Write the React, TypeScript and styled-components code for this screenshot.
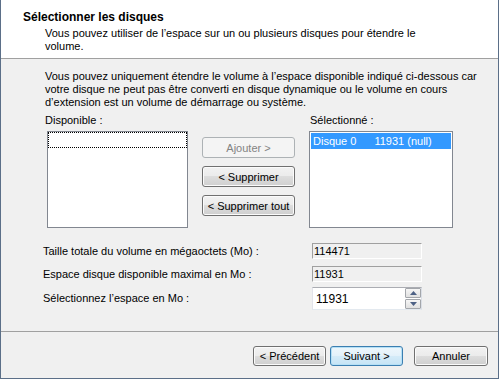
import styled, { createGlobalStyle } from "styled-components";

const GlobalStyle = createGlobalStyle`
  html, body {
    margin: 0;
    padding: 0;
    background: #ffffff;
  }
  * {
    box-sizing: border-box;
  }
`;

const Window = styled.div`
  width: 499px;
  height: 379px;
  display: flex;
  flex-direction: column;
  background: #f0f0f0;
  border: 1px solid #5b6f88;
  border-top: none;
  font-family: "Liberation Sans", Arial, sans-serif;
  font-size: 11px;
  color: #000;
`;

const Header = styled.header`
  height: 59px;
  background: #ffffff;
  padding: 10px 0 0 22px;
  border-bottom: 1px solid #a0a0a0;
`;

const Title = styled.h1`
  margin: 0;
  font-size: 12px;
  font-weight: bold;
  line-height: 14px;
`;

const Subtitle = styled.p`
  margin: 3px 0 0 22px;
  line-height: 13px;
`;

const Body = styled.main`
  flex: 1;
  padding: 11px 0 0 43px;
  display: flex;
  flex-direction: column;
`;

const Intro = styled.p`
  margin: 0 0 0 1px;
  line-height: 13px;
`;

const Picker = styled.div`
  margin-top: 5px;
  display: grid;
  grid-template-columns: 144px 93px 144px;
  grid-template-rows: 13px 97px;
  column-gap: 14px;
  row-gap: 4px;
  & > :nth-child(3) {
    margin-left: 3px;
  }
`;

const Caption = styled.span<{ $col: number }>`
  grid-column: ${(p) => p.$col};
  line-height: 13px;
  padding-left: 1px;
`;

const ListBox = styled.div`
  background: #ffffff;
  border: 1px solid #828790;
`;

const FocusRow = styled.div`
  height: 16px;
  border: 1px dotted #000;
`;

const SelectedRow = styled.div`
  margin: 1px;
  height: 16px;
  background: #3399ff;
  color: #ffffff;
  display: flex;
  align-items: center;
  padding-left: 2px;
  gap: 18px;
`;

const ButtonStack = styled.div`
  padding-top: 6px;
  display: flex;
  flex-direction: column;
  gap: 8px;
`;

const Button = styled.button<{ $default?: boolean; $w?: number; $h?: number }>`
  width: ${(p) => p.$w ?? 93}px;
  height: ${(p) => p.$h ?? 21}px;
  padding: 0;
  font-family: inherit;
  font-size: 11px;
  color: #000;
  border-radius: 3px;
  border: 1px solid ${(p) => (p.$default ? "#3c7fb1" : "#707070")};
  box-shadow: inset 0 0 0 1px ${(p) => (p.$default ? "#b5e0f6" : "#fbfbfb")};
  background: ${(p) =>
    p.$default
      ? "linear-gradient(to bottom, #eef7fc 0%, #e3f1fa 50%, #d4ebf8 50%, #c6e4f6 100%)"
      : "linear-gradient(to bottom, #f2f2f2 0%, #ebebeb 50%, #dddddd 50%, #cfcfcf 100%)"};

  &:disabled {
    color: #838383;
    border-color: #adb2b5;
    box-shadow: none;
    background: #f4f4f4;
  }
`;

const Fields = styled.div`
  margin-top: 15px;
  display: flex;
  flex-direction: column;
`;

const FieldRow = styled.div<{ $gap: number }>`
  display: grid;
  grid-template-columns: 269px 110px;
  align-items: center;
  margin-top: ${(p) => p.$gap}px;
  margin-left: -1px;
`;

const FieldLabel = styled.span`
  line-height: 13px;
`;

const StaticValue = styled.div`
  height: 16px;
  border: 1px solid #a0a0a0;
  border-right-color: #ffffff;
  border-bottom-color: #ffffff;
  line-height: 14px;
  padding-left: 1px;
`;

const SpinBox = styled.div`
  height: 23px;
  background: #ffffff;
  border: 1px solid #abadb3;
  border-left-color: #e2e3ea;
  border-right-color: #dbdfe6;
  border-bottom-color: #e3e9ef;
  display: flex;
  align-items: center;
  justify-content: space-between;
  padding-left: 3px;
  padding-right: 0px;
  font-size: 12px;
`;

const SpinButtons = styled.div`
  display: flex;
  flex-direction: column;
  gap: 1px;
`;

const SpinButton = styled.div`
  width: 16px;
  height: 10px;
  border: 1px solid #a3a6ab;
  border-radius: 1px;
  background: linear-gradient(to bottom, #f6f6f6, #e0e0e0);
  display: flex;
  align-items: center;
  justify-content: center;
`;

const Footer = styled.footer`
  height: 47px;
  border-top: 1px solid #a0a0a0;
  display: flex;
  justify-content: flex-end;
  align-items: flex-start;
  padding: 14px 10px 0 0;
`;

const NavGroup = styled.div`
  display: flex;
  gap: 4px;
  margin-right: 11px;
`;

function Arrow({ up }: { up?: boolean }) {
  return (
    <svg width="7" height="4" viewBox="0 0 7 4">
      <path d={up ? "M0 4 L3.5 0 L7 4 Z" : "M0 0 L3.5 4 L7 0 Z"} fill="#4d6185" />
    </svg>
  );
}

export default function App() {
  return (
    <Window>
      <GlobalStyle />
      <Header>
        <Title>Sélectionner les disques</Title>
        <Subtitle>
          Vous pouvez utiliser de l’espace sur un ou plusieurs disques pour étendre le
          <br />
          volume.
        </Subtitle>
      </Header>
      <Body>
        <Intro>
          Vous pouvez uniquement étendre le volume à l’espace disponible indiqué ci-dessous car
          <br />
          votre disque ne peut pas être converti en disque dynamique ou le volume en cours
          <br />
          d’extension est un volume de démarrage ou système.
        </Intro>
        <Picker>
          <Caption $col={1}>Disponible :</Caption>
          <Caption $col={3}>Sélectionné :</Caption>
          <ListBox>
            <FocusRow />
          </ListBox>
          <ButtonStack>
            <Button disabled>Ajouter &gt;</Button>
            <Button>&lt; Supprimer</Button>
            <Button>&lt; Supprimer tout</Button>
          </ButtonStack>
          <ListBox>
            <SelectedRow>
              <span>Disque 0</span>
              <span>11931 (null)</span>
            </SelectedRow>
          </ListBox>
        </Picker>
        <Fields>
          <FieldRow $gap={0}>
            <FieldLabel>Taille totale du volume en mégaoctets (Mo) :</FieldLabel>
            <StaticValue>114471</StaticValue>
          </FieldRow>
          <FieldRow $gap={7}>
            <FieldLabel>Espace disque disponible maximal en Mo :</FieldLabel>
            <StaticValue>11931</StaticValue>
          </FieldRow>
          <FieldRow $gap={5}>
            <FieldLabel>Sélectionnez l’espace en Mo :</FieldLabel>
            <SpinBox>
              <span>11931</span>
              <SpinButtons>
                <SpinButton>
                  <Arrow up />
                </SpinButton>
                <SpinButton>
                  <Arrow />
                </SpinButton>
              </SpinButtons>
            </SpinBox>
          </FieldRow>
        </Fields>
      </Body>
      <Footer>
        <NavGroup>
          <Button $w={73} $h={20}>&lt; Précédent</Button>
          <Button $w={73} $h={20} $default>Suivant &gt;</Button>
        </NavGroup>
        <Button $w={74} $h={20}>Annuler</Button>
      </Footer>
    </Window>
  );
}
